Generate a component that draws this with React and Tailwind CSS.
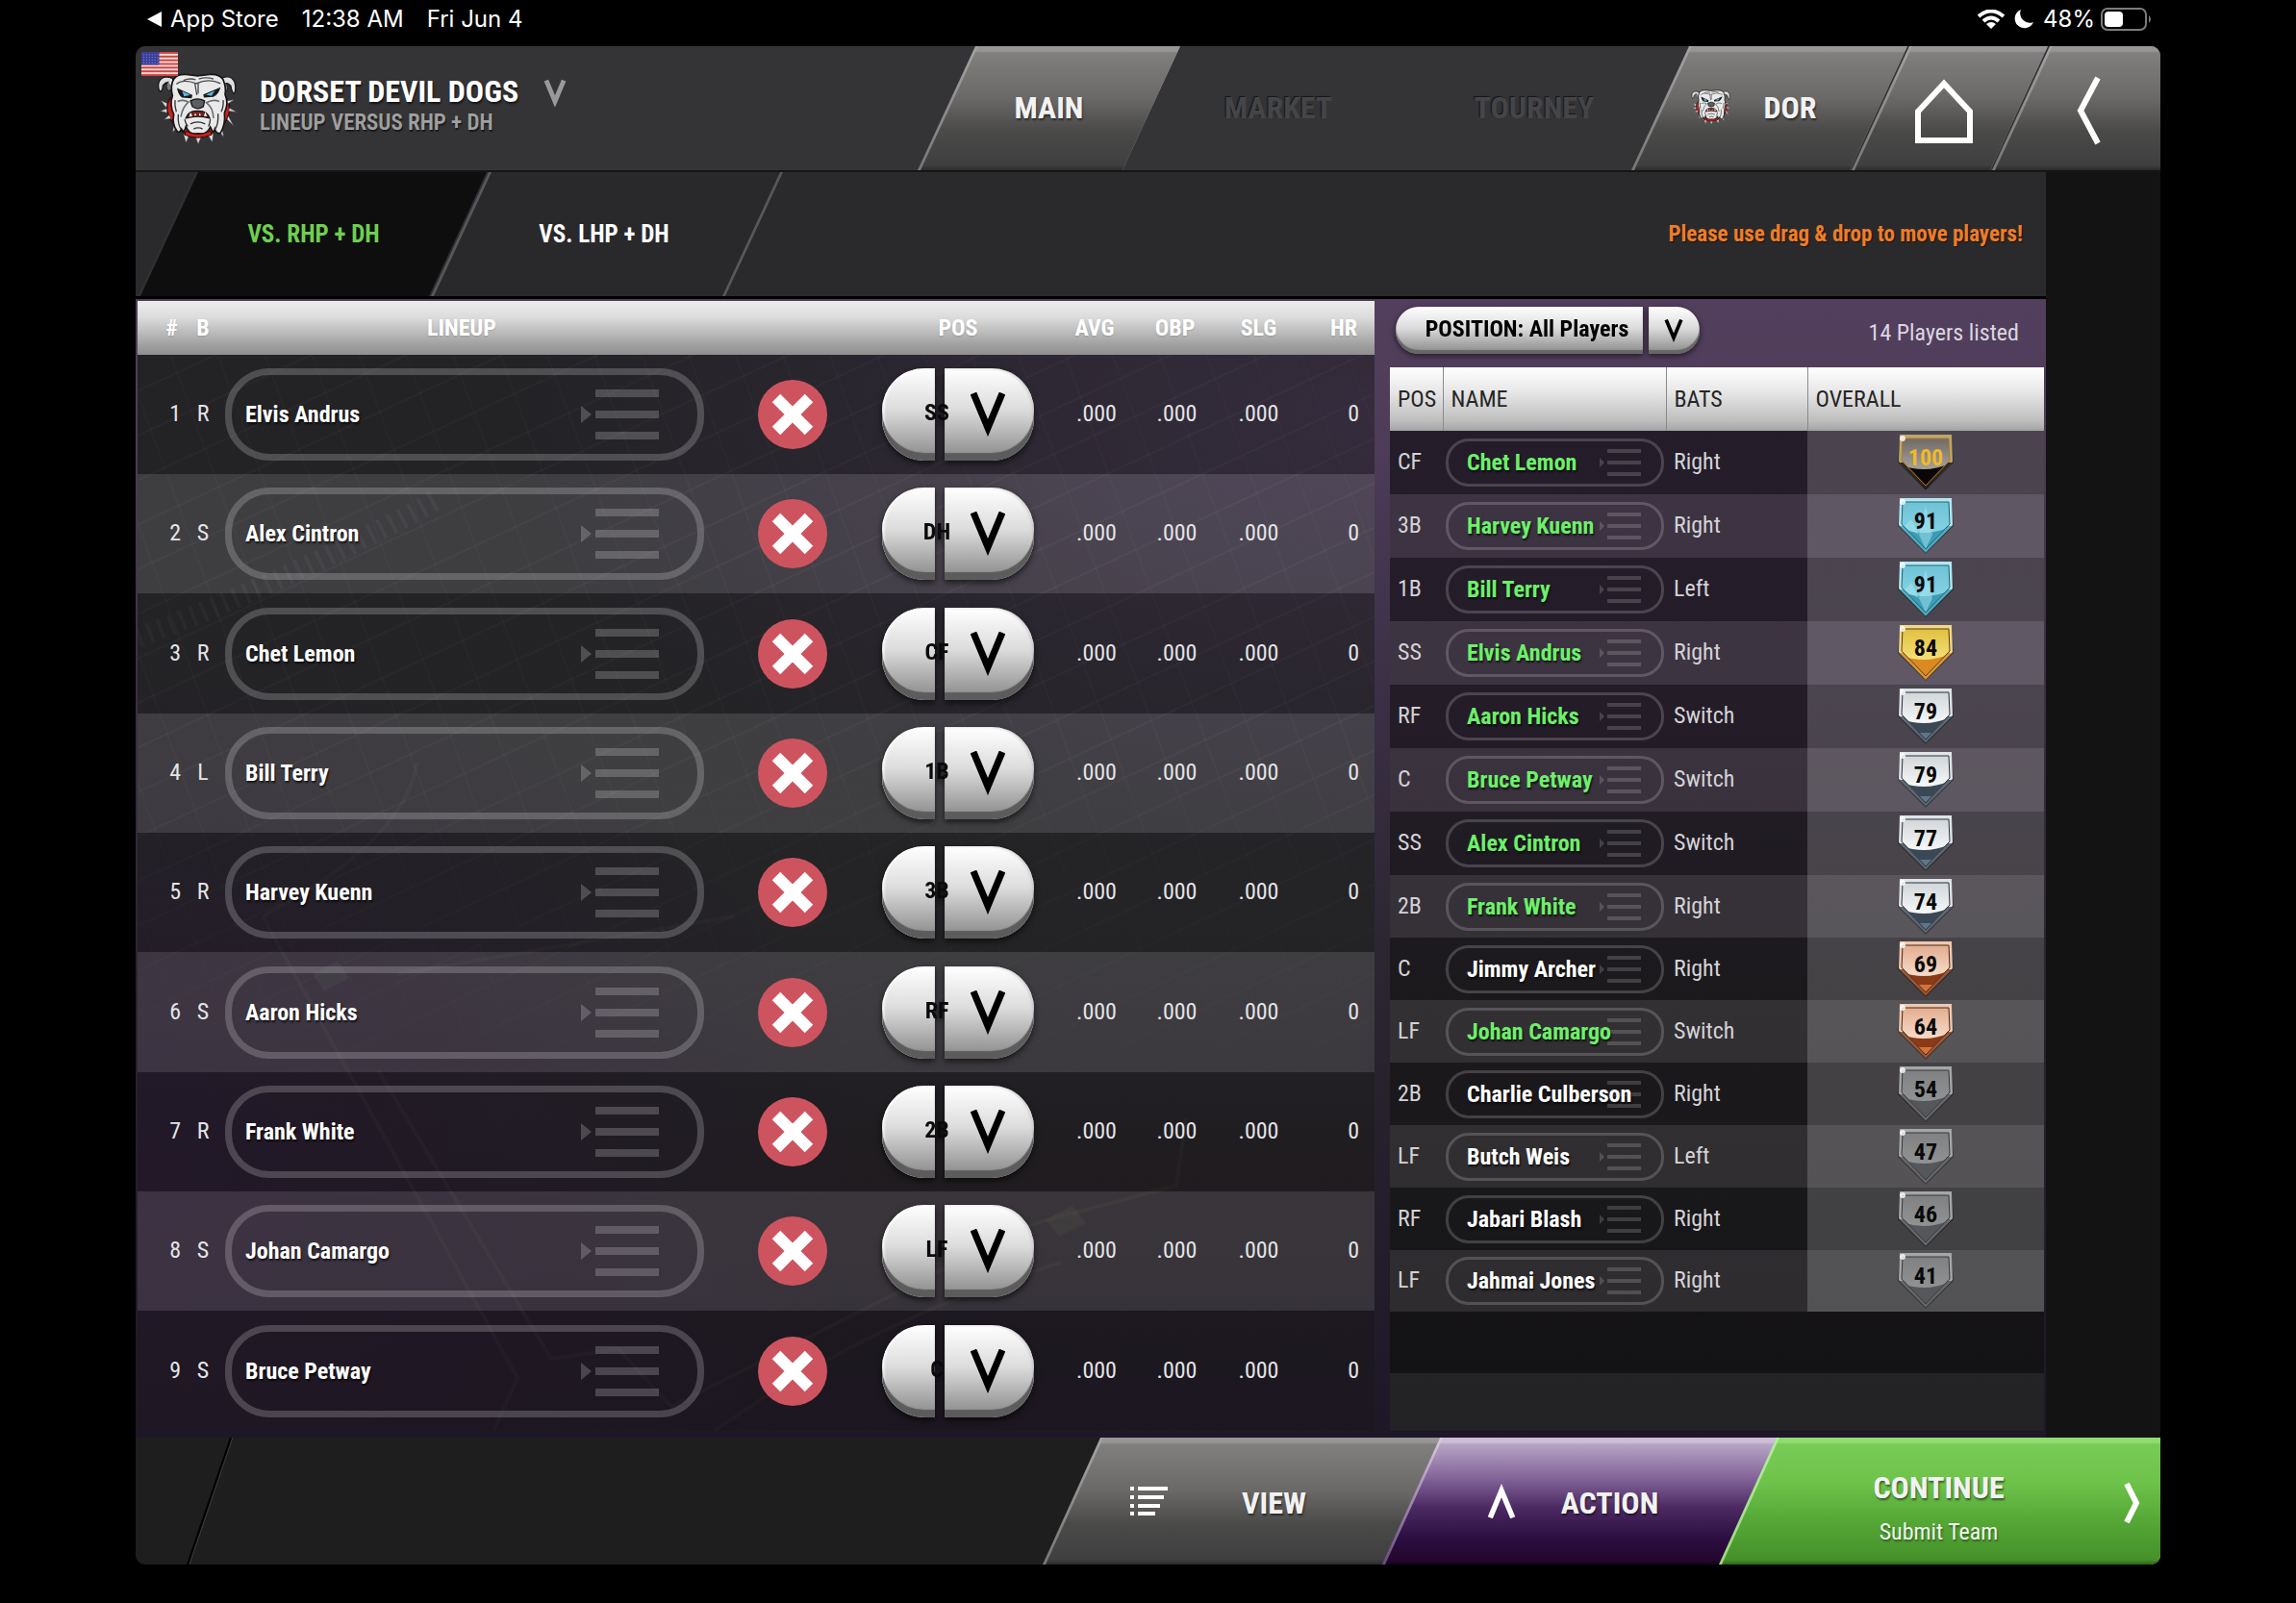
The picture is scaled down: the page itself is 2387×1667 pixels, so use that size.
import React from "react";

const FONT = "font-['Roboto_Condensed','Liberation_Sans_Narrow',Roboto,sans-serif]";

const LINEUP = [
  ["R", "Elvis Andrus", "SS"],
  ["S", "Alex Cintron", "DH"],
  ["R", "Chet Lemon", "CF"],
  ["L", "Bill Terry", "1B"],
  ["R", "Harvey Kuenn", "3B"],
  ["S", "Aaron Hicks", "RF"],
  ["R", "Frank White", "2B"],
  ["S", "Johan Camargo", "LF"],
  ["S", "Bruce Petway", "C"],
];

const PLAYERS = [
  ["CF", "Chet Lemon", "Right", 100, true],
  ["3B", "Harvey Kuenn", "Right", 91, true],
  ["1B", "Bill Terry", "Left", 91, true],
  ["SS", "Elvis Andrus", "Right", 84, true],
  ["RF", "Aaron Hicks", "Switch", 79, true],
  ["C", "Bruce Petway", "Switch", 79, true],
  ["SS", "Alex Cintron", "Switch", 77, true],
  ["2B", "Frank White", "Right", 74, true],
  ["C", "Jimmy Archer", "Right", 69, false],
  ["LF", "Johan Camargo", "Switch", 64, true],
  ["2B", "Charlie Culberson", "Right", 54, false],
  ["LF", "Butch Weis", "Left", 47, false],
  ["RF", "Jabari Blash", "Right", 46, false],
  ["LF", "Jahmai Jones", "Right", 41, false],
];

const POSITIONS = ["C", "1B", "2B", "3B", "SS", "LF", "CF", "RF", "DH"];

const SLANT = "[clip-path:polygon(60px_0,100%_0,calc(100%_-_60px)_100%,0_100%)]";
const SLANT_END = "[clip-path:polygon(60px_0,100%_0,100%_100%,0_100%)]";

/* ---------- drawings ---------- */

function Bulldog({ className }) {
  const spikes = [
    "118,190 97,180 114,204", "116,206 95,214 118,220", "124,226 107,240 130,238",
    "138,256 134,282 148,264", "168,286 176,314 186,290", "204,290 214,318 226,290",
    "244,288 258,312 262,284", "278,276 294,296 290,270", "304,240 326,262 308,228",
    "308,214 336,218 312,204", "306,192 328,178 302,182",
  ];
  return (
    <svg viewBox="85 90 255 230" className={className} aria-hidden="true">
      <path d="M128 172 Q112 196 120 222 Q134 262 168 280 Q212 302 262 280 Q300 262 310 222 Q316 196 302 174Z" fill="#c9211e" stroke="#2a0d0c" strokeWidth="4" />
      <g fill="#d9dcdf" stroke="#333" strokeWidth="2">
        {spikes.map((p) => <polygon key={p} points={p} />)}
      </g>
      <path d="M134 112 Q104 100 92 122 Q86 142 96 154 Q104 150 104 134 Q112 124 120 124 Q112 138 122 150 L142 142Z" fill="#dedede" stroke="#161616" strokeWidth="4" />
      <path d="M290 110 Q318 100 328 124 Q334 148 326 160 Q318 154 316 136 Q308 126 300 128 Q310 142 300 154 L280 142Z" fill="#dedede" stroke="#161616" strokeWidth="4" />
      <path d="M120 124 Q112 138 122 150 L136 140Z M300 128 Q310 142 300 154 L286 140Z" fill="#77797c" />
      <path d="M138 114 Q150 98 176 100 L212 104 L250 100 Q280 98 292 116 Q302 140 298 162 Q310 190 296 220 Q300 256 284 282 Q272 288 266 270 Q262 288 252 264 Q240 290 214 284 Q186 290 176 262 Q170 286 162 270 Q154 286 148 276 Q132 256 138 224 Q124 196 134 166 Q126 136 138 114Z" fill="#e9e9ea" stroke="#161616" strokeWidth="5" />
      <path d="M146 130 Q168 112 208 128 Q248 110 284 128 M168 118 Q188 110 206 116 M216 114 Q240 106 262 114 M204 128 L210 164 M214 128 L214 160" fill="none" stroke="#4a4b4d" strokeWidth="4" />
      <path d="M148 142 L196 164 L194 174 L164 172 Q152 164 148 142Z M284 140 L230 162 L232 172 L262 170 Q278 162 284 140Z" fill="#17191c" />
      <path d="M164 152 L190 164 L170 168Z M266 150 L238 163 L256 167Z" fill="#5fb6dc" />
      <path d="M190 182 Q212 170 234 182 L230 200 Q212 212 196 200Z" fill="#5c5e61" stroke="#161616" strokeWidth="4" />
      <path d="M150 184 Q168 176 184 186 Q166 200 160 232 M280 184 Q260 176 240 188 Q260 202 262 236" fill="none" stroke="#6a6d71" strokeWidth="5" />
      <path d="M176 236 Q184 212 212 214 Q242 212 250 236 Q214 226 176 236Z" fill="#74211f" stroke="#161616" strokeWidth="4" />
      <path d="M186 232 l4 -14 6 12z M232 230 l4 -14 6 14z M202 228 l3 -8 4 8z M216 228 l3 -8 4 8z" fill="#fff" />
      <path d="M152 224 Q150 254 160 270 M276 222 Q278 256 266 272 M190 254 Q212 242 236 254 M200 270 Q214 262 228 270 M172 240 Q176 256 182 262 M252 240 Q250 256 246 262 M142 180 Q140 200 146 216 M292 180 Q294 200 286 216" fill="none" stroke="#333" strokeWidth="4" />
      <path d="M176 276 Q212 296 252 276 L256 288 Q212 306 172 288Z" fill="#c9211e" stroke="#2a0d0c" strokeWidth="3" />
    </svg>
  );
}

function Flag({ className }) {
  return (
    <svg viewBox="0 0 39 26" preserveAspectRatio="none" className={className} aria-label="USA" role="img">
      <rect width="39" height="26" fill="#f3d9d4" />
      {[0, 4, 8, 12, 16, 20, 24].map((y) => <rect key={y} y={y} width="39" height="2" fill="#cf4343" />)}
      <rect width="19" height="14" fill="#3a3f9c" />
      {[2, 5, 8, 11].map((y) => (
        <path key={y} d={`M2 ${y + 1}H18`} stroke="#8f93d0" strokeWidth="1" strokeDasharray="1 2" />
      ))}
    </svg>
  );
}

function Vee({ className, width = 6 }) {
  return (
    <svg viewBox="0 0 36 46" className={className} fill="none" stroke="currentColor" strokeWidth={width} aria-hidden="true">
      <path d="M3 1 L18 37 L33 1" strokeMiterlimit="10" />
    </svg>
  );
}

function BigHandle() {
  return (
    <svg viewBox="0 0 82 54" className="h-[54px] w-[82px] shrink-0" fill="#fff" fillOpacity="0.2" aria-hidden="true">
      <path d="M0 18 L11 27 L0 36Z M15 1h66v8h-66z M15 23h66v8h-66z M15 45h66v8h-66z" />
    </svg>
  );
}

function SmallHandle() {
  return (
    <svg viewBox="0 0 44 30" className="absolute top-[7px] right-5 h-[30px] w-[44px]" fill="#fff" fillOpacity="0.17" aria-hidden="true">
      <path d="M0 10 L5 15 L0 20Z M8 1h35v4h-35z M8 13h35v4h-35z M8 25h35v4h-35z" />
    </svg>
  );
}

/* Faint ballpark markings behind the lineup */
function FieldLines() {
  return (
    <svg viewBox="0 0 1286 1175" preserveAspectRatio="none" className="pointer-events-none absolute inset-0 h-full w-full" fill="none" stroke="#fff" aria-hidden="true">
      <path d="M0 350 Q160 290 316 204" strokeWidth="22" strokeDasharray="4 8" strokeOpacity="0.04" />
      <g stroke="#b9c08a" strokeOpacity="0.04" strokeWidth="4">
        <path d="M130 640 L395 1120 L370 1175 M250 800 L430 1100 L500 1090 L555 1150" />
        <path d="M130 640 Q280 560 290 480 M555 1150 L930 960 L1080 920 L1090 850" />
        <path d="M270 700 L620 640 M600 1175 Q760 1060 960 1000" />
      </g>
      <path d="M182 700 l26 -14 12 18 -26 14z M944 955 l28 -14 14 18 -28 14z" fill="#b9c08a" fillOpacity="0.05" stroke="none" />
    </svg>
  );
}

const TIERS = {
  black: { rim: "#b9a86a", a: "#6f6a66", b: "#aaa59c", low: "#0a0706", line: "#b9722c", text: "#f0b92a" },
  diamond: { rim: "#b4e6f0", a: "#6fc3d6", b: "#86d3e2", low: "#3b9cb4", line: "#1c6478", text: "#0a0a0a" },
  gold: { rim: "#f0d78a", a: "#e0c040", b: "#f5e27c", low: "#d98a22", line: "#5c3c0a", text: "#0a0a0a" },
  silver: { rim: "#dfe4e8", a: "#d2d6d9", b: "#f8fafa", low: "#3a4856", line: "#2b333b", text: "#0a0a0a" },
  bronze: { rim: "#edc9b0", a: "#e2ad90", b: "#f8dfce", low: "#8a3a16", line: "#4d2613", text: "#0a0a0a" },
  gray: { rim: "#a5a6a7", a: "#808182", b: "#929394", low: "#55575a", line: "#36383a", text: "#0a0a0a" },
};

function tierOf(n) {
  if (n >= 100) return "black";
  if (n >= 90) return "diamond";
  if (n >= 80) return "gold";
  if (n >= 70) return "silver";
  if (n >= 60) return "bronze";
  return "gray";
}

function Badge({ value }) {
  const name = tierOf(value);
  const t = TIERS[name];
  return (
    <svg viewBox="0 0 58 58" className={`mx-auto block h-[58px] w-[58px] ${FONT}`} role="img" aria-label={`Overall ${value}`}>
      <defs>
        <linearGradient id={`top-${name}`} x1="0" y1="0" x2="0" y2="0.7">
          <stop offset="0" stopColor={t.a} />
          <stop offset="1" stopColor={t.b} />
        </linearGradient>
        <clipPath id="plate"><path d="M5 4 H53 L54 27 L29 53 L4 27Z" /></clipPath>
      </defs>
      <path d="M2 1 H56 L58 29 L29 58 L0 29Z" fill="#000" fillOpacity="0.35" />
      <path d="M2 0 H56 L57 28 L29 56 L1 28Z" fill={t.rim} />
      <path d="M2 29 L29 57 L56 29Z" fill={t.low} fillOpacity="0.8" />
      <path d="M5 4 H53 L54 27 L29 53 L4 27Z" fill={`url(#top-${name})`} />
      <path d="M0 30 Q29 43 58 28 V58 H0Z" fill={t.low} clipPath="url(#plate)" />
      {name === "diamond" && <path d="M29 8 L36 38 L22 38Z M29 53 L22 38 L36 38Z M14 22 L22 38 L6 30Z" fill="#a9e6f1" fillOpacity="0.5" />}
      {name === "bronze" && <path d="M21 45 H37 L29 53Z" fill="#d0743c" />}
      {name === "silver" && <path d="M22 46 H36 L29 53Z" fill="#60748a" />}
      <path d="M5 4 H53 L54 27 L29 53 L4 27Z" fill="none" stroke={t.line} strokeWidth="1" />
      <circle cx="5" cy="4" r="3" fill="#fff" fillOpacity="0.8" />
      <text x="29" y="32" textAnchor="middle" fontSize="24" fontWeight="700" fill={t.text}>{value}</text>
    </svg>
  );
}

/* ---------- pieces ---------- */

function StatusBar() {
  return (
    <div className="flex h-12 items-start justify-between pt-[3px] pl-3 pr-2 font-['Inter','Liberation_Sans',sans-serif] text-[24px] leading-[34px] text-white">
      <div className="flex items-center">
        <svg viewBox="0 0 16 16" className="mr-2 h-4 w-4" fill="currentColor" aria-hidden="true"><path d="M0 8 L15 0 V16Z" /></svg>
        <a href="#store">App Store</a>
        <span className="ml-6">12:38 AM</span>
        <span className="ml-6">Fri Jun 4</span>
      </div>
      <div className="flex items-center">
        <svg viewBox="0 0 28 20" className="mr-2.5 h-5 w-7" fill="none" stroke="currentColor" strokeWidth="4" aria-label="Wi-Fi" role="img">
          <path d="M1 7 Q14 -4 27 7" /><path d="M6 12 Q14 5 22 12" /><path d="M14 20 L9 15 Q14 11 19 15Z" fill="currentColor" stroke="none" />
        </svg>
        <svg viewBox="0 0 20 20" className="mr-2.5 h-5 w-5" fill="currentColor" aria-label="Do not disturb" role="img">
          <path d="M7 0 A10 10 0 1 0 20 13 A10 10 0 0 1 7 0Z" />
        </svg>
        <span className="mr-1.5">48%</span>
        <svg viewBox="0 0 54 24" className="h-6 w-[54px]" aria-label="Battery" role="img">
          <rect x="1" y="1" width="46" height="22" rx="6" fill="none" stroke="#7c7c7c" strokeWidth="2" />
          <rect x="4" y="4" width="19" height="16" rx="4" fill="#fff" />
          <path d="M50 8 Q54 12 50 16Z" fill="#7c7c7c" />
        </svg>
      </div>
    </div>
  );
}

const TONES = {
  gray: {
    edge: "bg-gradient-to-b from-[#a3a3a3] to-[#777]",
    face: "bg-[linear-gradient(180deg,#979696_0,#979696_5px,#817f7e_7px,#6b6967_42%,#4a4a49_68%,#3f3f3f_calc(100%_-_5px),#2b2b2b_100%)]",
  },
  purple: {
    edge: "bg-gradient-to-b from-[#d9cbe2] to-[#6a4a80]",
    face: "bg-[linear-gradient(180deg,#cdbdd6_0,#cdbdd6_5px,#b7a5c3_7px,#836499_32%,#4b2a62_55%,#2c0d40_80%,#24062f_calc(100%_-_5px),#14021c_100%)]",
  },
  green: {
    edge: "bg-gradient-to-b from-[#b5ec9c] to-[#9cd782]",
    face: "bg-[linear-gradient(180deg,#8fdc70_0,#8fdc70_5px,#79cb57_7px,#6ec34a_35%,#55a836_65%,#46912a_calc(100%_-_5px),#2c6317_100%)]",
  },
};

function Slanted({ tone, end, className, children, label }) {
  const clip = end ? SLANT_END : SLANT;
  return (
    <button type="button" aria-label={label} className={`relative h-full shrink-0 ${clip} ${TONES[tone].edge} ${className}`}>
      <span aria-hidden="true" className={`absolute inset-y-0 right-0 left-[3px] ${clip} ${TONES[tone].face}`} />
      <span className="relative flex h-full items-center justify-center">{children}</span>
    </button>
  );
}

const HEAD_TEXT = "text-[32px] leading-8 font-bold text-[#f2f2f2] [text-shadow:1px_2px_2px_rgba(0,0,0,0.5)]";
const OFF_TEXT = "pb-0.5 text-[32px] font-bold text-[#454547] [text-shadow:-1px_-1px_1px_rgba(0,0,0,0.6)]";

function Header() {
  return (
    <header className="flex h-[131px] items-stretch border-b-2 border-[#161616] bg-[#343436]">
      <div className="flex min-w-0 flex-1 items-start">
        <div className="relative mt-[26px] ml-[22px] h-[77px] w-[85px] shrink-0">
          <Bulldog className="h-full w-full" />
          <Flag className="absolute -top-5 -left-4 h-[25px] w-[38px]" />
        </div>
        <div className="mt-[30px] ml-[22px]">
          <h1 className="text-[32px] leading-[34px] font-bold whitespace-nowrap text-white [text-shadow:1px_2px_2px_rgba(0,0,0,0.6)]">DORSET DEVIL DOGS</h1>
          <p className="text-[23px] leading-8 font-semibold whitespace-nowrap text-[#a0a0a0] [text-shadow:1px_2px_1px_rgba(0,0,0,0.5)]">LINEUP VERSUS RHP + DH</p>
        </div>
        <button type="button" aria-label="Change team" className="mt-[35px] ml-[26px] text-[#999]">
          <Vee className="h-[28px] w-[24px]" width={8} />
        </button>
      </div>
      <nav className="flex h-full shrink-0 items-stretch">
        <Slanted tone="gray" className="w-[273px]"><span className={`${HEAD_TEXT} mb-0.5`}>MAIN</span></Slanted>
        <button type="button" disabled className={`-ml-[30px] w-[264px] ${OFF_TEXT}`}>MARKET</button>
        <button type="button" disabled className={`w-[268px] ${OFF_TEXT}`}>TOURNEY</button>
        <Slanted tone="gray" className="-ml-[33px] w-[287px]">
          <Bulldog className="mr-[33px] mb-1 h-[38px] w-[42px]" />
          <span className={`${HEAD_TEXT} mr-8 mb-0.5`}>DOR</span>
        </Slanted>
        <Slanted tone="gray" label="Home" className="-ml-[58px] w-[204px]">
          <svg viewBox="0 0 60 68" className="mt-1.5 mr-3 h-[68px] w-[60px]" fill="none" stroke="#fff" strokeWidth="6" aria-hidden="true">
            <path d="M3 34 L30 5 L57 34 V64 H3Z" />
          </svg>
        </Slanted>
        <Slanted tone="gray" end label="Back" className="-ml-[58px] w-[175px]">
          <svg viewBox="0 0 26 72" className="mt-1 ml-[26px] h-[72px] w-[26px]" fill="none" stroke="#fff" strokeWidth="6" aria-hidden="true">
            <path d="M22 2 L4 36 L22 70" />
          </svg>
        </Slanted>
      </nav>
    </header>
  );
}

function Tab({ active, children }) {
  return (
    <button type="button" role="tab" aria-selected={active} className={`relative h-full w-[366px] ${SLANT} ${active ? "bg-[#2f2f31]" : "-ml-[61px] bg-[#58585c] pr-1.5"}`}>
      <span aria-hidden="true" className={`absolute inset-y-0 right-[3px] left-[3px] ${SLANT} ${active ? "bg-[#0e0e0f]" : "bg-[#29292b]"}`} />
      <span className={`relative text-[25px] font-bold ${active ? "text-[#6fcf50]" : "text-white"}`}>{children}</span>
    </button>
  );
}

function TabRow() {
  return (
    <div className="flex h-[132px] items-stretch justify-between border-b-[3px] border-black bg-[#2a2a2c]">
      <div role="tablist" className="ml-0.5 flex h-full">
        <Tab active>VS. RHP + DH</Tab>
        <Tab>VS. LHP + DH</Tab>
      </div>
      <p className="mr-6 self-center text-[23px] leading-8 font-bold text-[#f07c28] [text-shadow:1px_1px_1px_rgba(0,0,0,0.6)]">Please use drag &amp; drop to move players!</p>
    </div>
  );
}

const PILL = "bg-[linear-gradient(180deg,#fff_0%,#dcdcdc_45%,#969696_90%,#8c8c8c_100%)]";

function PosSelect({ value, slot }) {
  return (
    <div className="relative flex h-[96px] w-[158px] gap-2.5 drop-shadow-[0_3px_3px_rgba(0,0,0,0.6)]">
      <span aria-hidden="true" className={`w-[55px] rounded-l-[44px] ${PILL} shadow-[inset_0_-8px_1px_#5c5c5c,inset_2px_0_3px_#fff]`} />
      <span aria-hidden="true" className={`flex w-[93px] items-center rounded-r-[44px] pl-[27px] text-black ${PILL} shadow-[inset_0_-8px_1px_#5c5c5c,inset_-2px_0_3px_#ccc]`}>
        <Vee className="h-[46px] w-[36px]" width={7} />
      </span>
      <select aria-label={`Position for spot ${slot}`} defaultValue={value} className="absolute inset-0 h-full w-full appearance-none bg-transparent pr-[44px] pb-1 text-center text-[24px] font-bold text-[#0a0a0a]">
        {POSITIONS.map((p) => <option key={p}>{p}</option>)}
      </select>
    </div>
  );
}

function LineupTable() {
  return (
    <div className="relative ml-0.5 min-w-0 flex-1 bg-[radial-gradient(ellipse_70%_40%_at_100%_10%,#42374c_0%,transparent_100%),radial-gradient(ellipse_60%_45%_at_0%_78%,#2b1f33_0%,transparent_100%),linear-gradient(180deg,#2c2b2f_0%,#2d2c30_55%,#272328_80%,#231c28_100%)]">
      <div aria-hidden="true" className="pointer-events-none absolute inset-0 bg-[repeating-linear-gradient(155deg,rgba(255,255,255,0.03)_0_2px,transparent_2px_42px),repeating-linear-gradient(70deg,rgba(255,255,255,0.02)_0_2px,transparent_2px_46px)] [mask-image:linear-gradient(180deg,#000_40%,transparent_75%)]" />
      <FieldLines />
      <table className="relative w-full table-fixed border-collapse text-[24px] leading-8 text-[#e4e4e6]">
        <colgroup>
          <col className="w-[52px]" />
          <col className="w-[32px]" />
          <col />
          <col className="w-[170px]" />
          <col className="w-[186px]" />
          <col className="w-[86px]" />
          <col className="w-[85px]" />
          <col className="w-[85px]" />
          <col className="w-[78px]" />
        </colgroup>
        <thead>
          <tr className="h-[56px] bg-[linear-gradient(180deg,#ececec_0%,#dcdcdc_30%,#a2a2a2_80%,#8f8f8f_100%)] text-white [text-shadow:0_1px_2px_rgba(0,0,0,0.15)]">
            <th className="pr-2.5 text-right font-bold">#</th>
            <th className="font-bold">B</th>
            <th className="pr-1.5 font-bold">LINEUP</th>
            <th aria-label="Remove" />
            <th className="pr-3 font-bold">POS</th>
            <th className="font-bold">AVG</th>
            <th className="pr-1 font-bold">OBP</th>
            <th className="font-bold">SLG</th>
            <th className="pr-[18px] text-right font-bold">HR</th>
          </tr>
        </thead>
        <tbody>
          {LINEUP.map(([bats, name, pos], i) => (
            <tr key={name} className="h-[124px] odd:bg-black/20 even:bg-white/[0.085] [&:nth-child(3n)]:h-[125px]">
              <td className="pr-[7px] pb-0.5 text-right">{i + 1}</td>
              <td className="pb-0.5 text-center">{bats}</td>
              <td className="py-0">
                <div draggable className="mx-[7px] flex h-[96px] items-center justify-between rounded-[46px] border-[7px] border-white/20 pr-[39px] pl-3.5">
                  <span className="font-bold text-white [text-shadow:1px_2px_2px_rgba(0,0,0,0.7)]">{name}</span>
                  <BigHandle />
                </div>
              </td>
              <td className="py-0">
                <button type="button" aria-label={`Remove ${name}`} className="mx-auto flex h-[72px] w-[72px] items-center justify-center rounded-full bg-[#cd545f]">
                  <svg viewBox="0 0 44 44" className="h-[44px] w-[44px]" stroke="#fff" strokeWidth="12" aria-hidden="true"><path d="M5 5 L39 39 M39 5 L5 39" /></svg>
                </button>
              </td>
              <td className="py-0 pl-2"><PosSelect value={pos} slot={i + 1} /></td>
              <td className="pb-0.5 pl-1 text-center">.000</td>
              <td className="pb-0.5 text-center">.000</td>
              <td className="pb-0.5 text-center">.000</td>
              <td className="pr-4 pb-0.5 text-right">0</td>
            </tr>
          ))}
        </tbody>
      </table>
    </div>
  );
}

function rowHeight(i) {
  if (i < 7) return "h-[66px]";
  return i === 13 ? "h-[64px]" : "h-[65px]";
}

function PlayerPanel() {
  return (
    <section className="mr-0.5 w-[680px] shrink-0">
      <div className="flex h-[69px] items-center justify-between pr-[26px] pl-1.5">
        <div className="relative mb-2 flex h-[49px] w-[316px] gap-1.5 drop-shadow-[0_2px_3px_rgba(0,0,0,0.6)]">
          <span aria-hidden="true" className={`flex-1 rounded-l-[24px] ${PILL} shadow-[inset_0_-4px_1px_#666]`} />
          <span aria-hidden="true" className={`flex w-[53px] items-center rounded-r-[24px] pl-4 text-black ${PILL} shadow-[inset_0_-4px_1px_#666]`}>
            <Vee className="h-[24px] w-[20px]" width={7} />
          </span>
          <select aria-label="Position filter" className="absolute inset-0 h-full w-full appearance-none bg-transparent pr-[43px] pb-1 text-center text-[24px] font-bold text-black">
            <option>POSITION: All Players</option>
            <option>POSITION: Infielders</option>
          </select>
        </div>
        <p className="mb-1 text-[24px] leading-8 text-[#dcd6e0]">14 Players listed</p>
      </div>
      <table className="w-full table-fixed border-collapse bg-[linear-gradient(180deg,#2e2435_0%,#2e2534_30%,#232024_60%,#1b1a1d_100%)] text-[24px] leading-8 text-[#d4d2d6]">
        <colgroup>
          <col className="w-[55px]" />
          <col className="w-[232px]" />
          <col className="w-[147px]" />
          <col />
        </colgroup>
        <thead>
          <tr className="h-[66px] bg-[linear-gradient(180deg,#fff_0%,#e6e6e6_40%,#bdbdbd_85%,#a3a3a3_100%)] text-left text-[#262626] [&>th+th]:border-l [&>th+th]:border-[#8a8a8a] [&>th]:pl-2 [&>th]:font-normal">
            <th>POS</th>
            <th>NAME</th>
            <th>BATS</th>
            <th>OVERALL</th>
          </tr>
        </thead>
        <tbody>
          {PLAYERS.map(([pos, name, bats, ovr, used], i) => (
            <tr key={name} className={`odd:bg-black/20 even:bg-white/[0.07] ${rowHeight(i)}`}>
              <td className="pb-0.5 pl-2">{pos}</td>
              <td className="py-0">
                <div draggable className="relative mr-0.5 ml-[3px] flex h-[50px] items-center rounded-[24px] border-[3px] border-white/[0.18] pl-[19px]">
                  <SmallHandle />
                  <span className={`relative font-bold whitespace-nowrap [text-shadow:1px_2px_2px_rgba(0,0,0,0.7)] ${used ? "text-[#6df06a]" : "text-white"}`}>{name}</span>
                </div>
              </td>
              <td className="pb-0.5 pl-2">{bats}</td>
              <td className="bg-white/[0.18] p-0"><Badge value={ovr} /></td>
            </tr>
          ))}
          <tr className="h-[64px] bg-black/30"><td colSpan={4} /></tr>
          <tr className="h-[60px] bg-white/[0.04]"><td colSpan={4} /></tr>
        </tbody>
      </table>
    </section>
  );
}

function Footer() {
  return (
    <footer className="flex h-[132px] items-stretch bg-[#1e1e1e]">
      <div className="min-w-0 flex-1">
        <svg viewBox="0 0 48 132" className="ml-[53px] h-full w-12" aria-hidden="true">
          <path d="M46 0 L1 132" stroke="#000" strokeWidth="2" />
          <path d="M48 0 L3 132" stroke="#3a3a3a" strokeWidth="1" />
        </svg>
      </div>
      <Slanted tone="gray" className="w-[413px]">
        <svg viewBox="0 0 40 34" className="mr-[76px] h-[34px] w-10" fill="#fff" aria-hidden="true">
          <path d="M0 2h4v4H0z M8 2h31v4H8z M0 11h4v4H0z M8 11h27v4H8z M0 20h4v4H0z M8 20h23v4H8z M0 28h4v4H0z M8 28h18v4H8z" />
        </svg>
        <span className={`${HEAD_TEXT} mt-1 mr-12`}>VIEW</span>
      </Slanted>
      <Slanted tone="purple" className="-ml-[60px] w-[411px]">
        <Vee className="mr-[46px] h-[36px] w-[32px] rotate-180 text-white" width={7} />
        <span className={`${HEAD_TEXT} mt-1 mr-4`}>ACTION</span>
      </Slanted>
      <Slanted tone="green" end className="-ml-[61px] w-[459px]">
        <span className="flex flex-1 flex-col items-center gap-3.5 pt-[18px] pl-9">
          <span className={HEAD_TEXT}>CONTINUE</span>
          <span className="text-[24px] leading-8 text-[#eef8ea] [text-shadow:1px_2px_2px_rgba(0,0,0,0.4)]">Submit Team</span>
        </span>
        <svg viewBox="0 0 18 44" className="mt-1 mr-5 h-[44px] w-[18px]" fill="none" stroke="#fff" strokeWidth="6" aria-hidden="true">
          <path d="M3 2 L13 22 L3 42" />
        </svg>
      </Slanted>
    </footer>
  );
}

export default function App() {
  return (
    <div className="min-h-screen bg-black px-[141px] pb-10">
      <StatusBar />
      <main className={`overflow-hidden rounded-[10px] bg-[#131314] ${FONT}`}>
        <Header />
        <div className="mr-[119px]">
          <TabRow />
          <div className="flex items-stretch gap-4 bg-[linear-gradient(180deg,#523f5d_0%,#503d5a_10%,#3b2f45_35%,#2a2530_60%,#1e1728_100%)] pt-0.5 pb-[7px]">
            <LineupTable />
            <PlayerPanel />
          </div>
        </div>
        <Footer />
      </main>
    </div>
  );
}
